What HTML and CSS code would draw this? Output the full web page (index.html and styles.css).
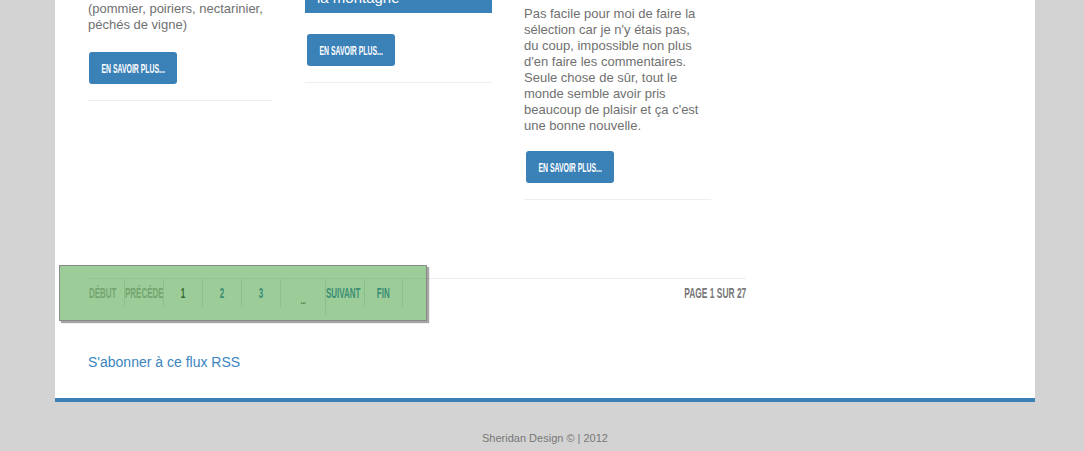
FILE: index.html
```html
<!DOCTYPE html>
<html lang="fr">

<head>
    <meta charset="UTF-8">
    <title>Sheridan Design - Articles</title>
    <link rel="stylesheet" href="styles.css">
</head>

<body>
    <div class="page">
        <div class="posts">
            <div class="col col-a">
                <div class="post">
                    <p>(pommier, poiriers, nectarinier,<br>péchés de vigne)</p>
                    <a class="more" href="#"><span class="cond">En savoir plus...</span></a>
                </div>
            </div>
            <div class="col col-b">
                <div class="post">
                    <h2 class="post-title">la montagne</h2>
                    <a class="more" href="#"><span class="cond">En savoir plus...</span></a>
                </div>
            </div>
            <div class="col col-c">
                <div class="post">
                    <p>Pas facile pour moi de faire la sélection car je n'y étais pas, du coup, impossible non plus d'en faire les commentaires. Seule chose de sûr, tout le monde semble avoir pris beaucoup de plaisir et ça c'est une bonne nouvelle.</p>
                    <a class="more" href="#"><span class="cond">En savoir plus...</span></a>
                </div>
            </div>
        </div>

        <div class="pager">
            <ul class="pages">
                <li class="off first"><span class="cond">Début</span></li>
                <li class="off prev"><span class="cond">Précédent</span></li>
                <li class="current"><span class="cond">1</span></li>
                <li><a href="#"><span class="cond">2</span></a></li>
                <li><a href="#"><span class="cond">3</span></a></li>
                <li class="dots"><span class="cond">...</span></li>
                <li class="next"><a href="#"><span class="cond">Suivant</span></a></li>
                <li class="last"><a href="#"><span class="cond">Fin</span></a></li>
            </ul>
            <div class="count"><span class="cond">Page 1 sur 27</span></div>
            <div class="highlight"></div>
        </div>

        <a class="rss" href="#">S'abonner à ce flux RSS</a>
    </div>

    <div class="footer">Sheridan Design &copy; | 2012</div>
</body>

</html>
```

FILE: styles.css
```css
* {
    box-sizing: border-box;
}

body {
    margin: 0;
    background-color: #d3d3d3;
    font-family: "Liberation Sans", Arial, sans-serif;
    color: #707070;
}

a {
    text-decoration: none;
}

.page {
    width: 980px;
    margin-left: 55px;
    padding: 0 33px 27px;
    background-color: #fff;
    border-bottom: 4px solid #3a81b8;
}

/* titres condensés type Bebas : Arial gras resserré */
.cond {
    display: inline-block;
    white-space: nowrap;
    font-weight: bold;
    text-transform: uppercase;
    transform: scaleX(0.57);
}

.posts {
    display: grid;
    grid-template-columns: 185px 187px 187px;
    column-gap: 32px;
    align-items: start;
}

.col-a {
    padding-top: 1px;
}

.col-c {
    padding-top: 6px;
}

.post {
    border-bottom: 1px solid #eee;
}

.post p {
    margin: 0 0 18px;
    font-size: 13px;
    line-height: 16px;
}

.col-a .post p {
    margin-bottom: 19px;
}

.col-c .post p {
    width: 181px;
    margin-bottom: 17px;
}

.post-title {
    margin: -12px 0 0;
    padding: 0 12px 5px;
    background-color: #3a81b8;
    color: #fff;
    font-size: 15px;
    font-weight: normal;
    line-height: 20px;
}

.post-title + .more {
    margin-top: 21px;
}

.more {
    display: flex;
    justify-content: center;
    align-items: center;
    width: 88px;
    height: 32px;
    margin: 0 0 16px 2px;
    background-color: #3a81b8;
    border-radius: 3px;
    color: #fff;
    font-size: 13.5px;
}

.col-a .more {
    margin-left: 1px;
}

.more .cond {
    transform: scaleX(0.51);
}

/* pagination */
.pager {
    position: relative;
    display: flex;
    justify-content: space-between;
    align-items: flex-start;
    width: 658px;
    margin-top: 78px;
    border-top: 1px solid #eee;
    font-size: 14px;
}

.pages {
    display: flex;
    align-items: flex-start;
    list-style: none;
    margin: 0;
    padding: 0;
}

.pages li {
    display: flex;
    justify-content: center;
    width: 39px;
    height: 28px;
    line-height: 28px;
    border-right: 1px solid #e3e3e3;
    overflow: hidden;
    color: #333;
}

.pages a {
    color: #3a81b8;
}

.pages li.off {
    color: #b0b0b0;
}

.pages li.first {
    width: 37px;
    justify-content: flex-start;
    padding-left: 1px;
}

.pages li.first .cond,
.pages li.prev .cond,
.pages li.next .cond {
    transform-origin: left;
}

.pages li.prev,
.pages li.next {
    justify-content: flex-start;
}

.pages li.dots {
    width: 45px;
    height: 36px;
    padding-top: 8px;
    font-size: 10px;
}

.pages li.last {
    width: 38px;
}

.count {
    line-height: 28px;
    color: #777;
}

.count .cond {
    transform: scaleX(0.6);
    transform-origin: right;
}

.highlight {
    position: absolute;
    left: -29px;
    top: -14px;
    width: 368px;
    height: 56px;
    background-color: rgba(57, 153, 49, 0.5);
    border: 1px solid #8a8a8a;
    box-shadow: 2px 2px 1px rgba(0, 0, 0, 0.35);
}

.rss {
    display: inline-block;
    margin-top: 39px;
    font-size: 14px;
    line-height: 16px;
    color: #3a84c0;
}

.footer {
    width: 980px;
    margin-left: 55px;
    padding-top: 30px;
    text-align: center;
    font-size: 11px;
    line-height: 13px;
    color: #777;
}
```
